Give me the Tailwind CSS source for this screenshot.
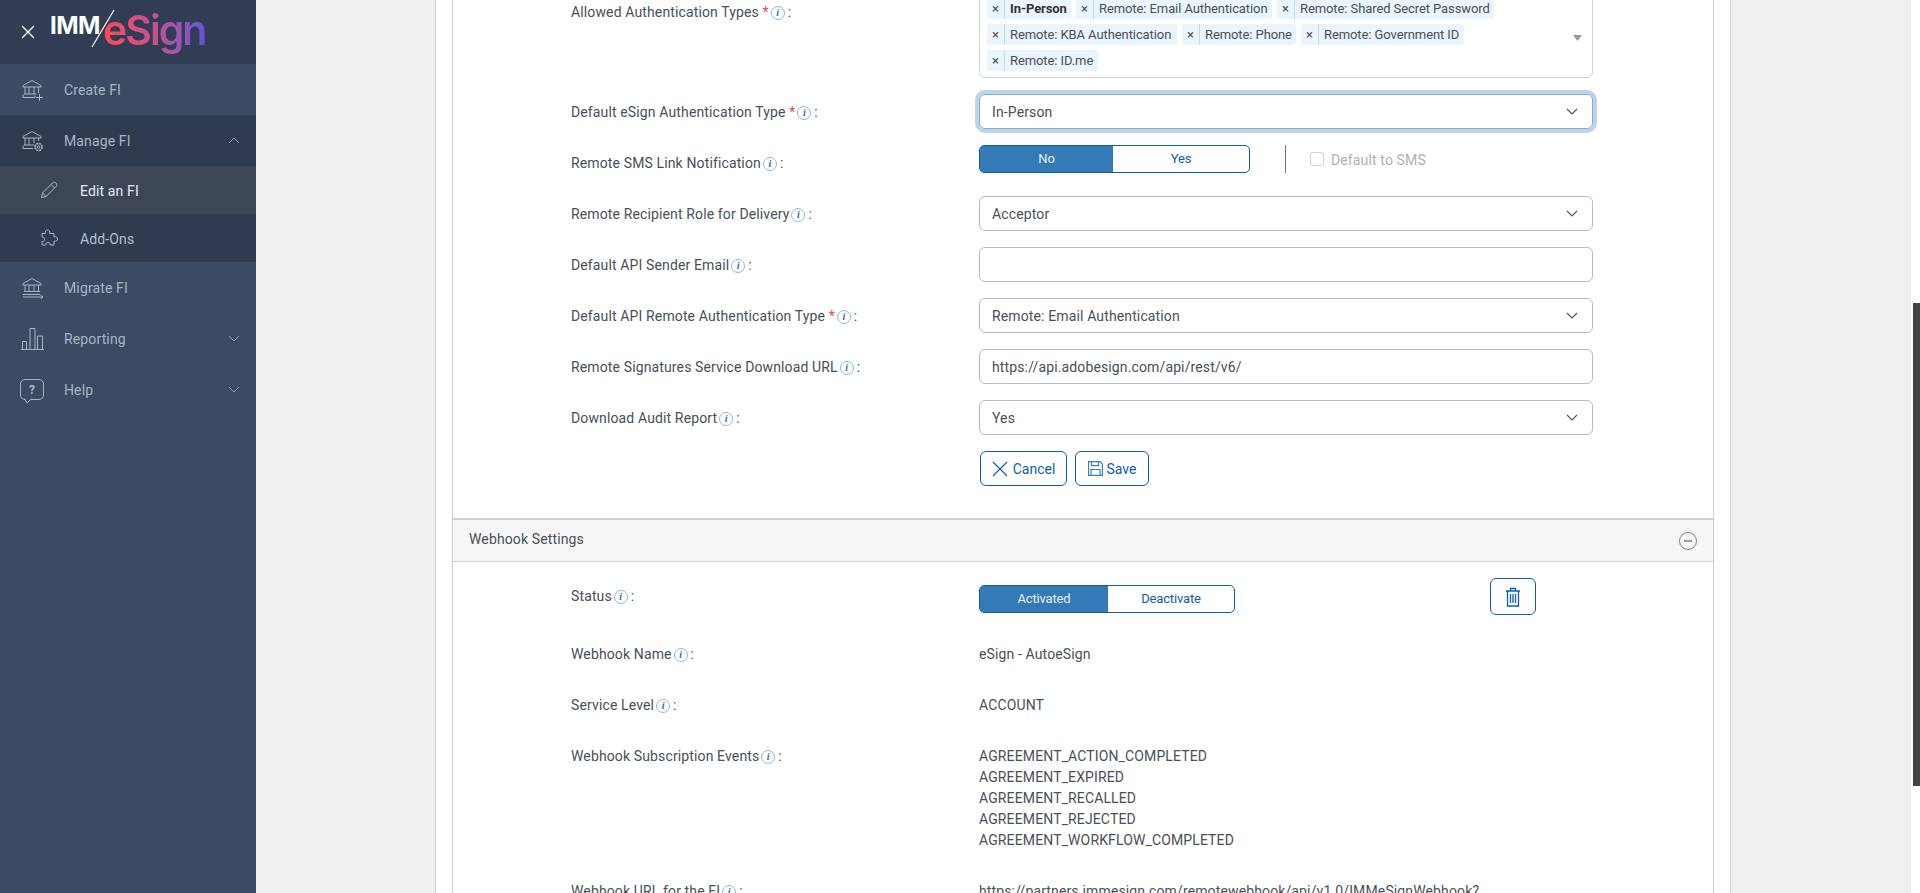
<!DOCTYPE html>
<html lang="en">
<head>
<meta charset="UTF-8">
<title>IMM eSign</title>
<script src="https://cdn.jsdelivr.net/npm/@tailwindcss/browser@4"></script>
</head>
<body class="font-['Roboto',sans-serif] text-[14px] tracking-[0.13px] text-[#495057] bg-white overflow-hidden">
<div class="flex h-[893px] overflow-hidden">

  <!-- Sidebar -->
  <aside class="w-[256px] shrink-0 bg-[#3b4b63] text-[14px] text-[#a9b4c4]">
    <div class="relative h-[64px] bg-[#313d54]">
      <svg class="absolute left-[21px] top-[25px] size-[14px]" viewBox="0 0 14 14" fill="none" stroke="#fff" stroke-width="1.3"><path d="M1 1l12 12M13 1L1 13"/></svg>
      <span class="absolute left-[50px] top-[11px] font-['Inter',sans-serif] font-bold text-[24px] tracking-[-0.6px] leading-[30px] text-white">IMM</span>
      <svg class="absolute left-[90px] top-[8px] w-[26px] h-[42px]" viewBox="0 0 26 42" fill="none" stroke="#fff" stroke-width="1.2"><path d="M2 39L24 2"/></svg>
      <span class="absolute left-[103px] top-[3px] font-['Inter',sans-serif] font-semibold text-[41px] tracking-[-2px] leading-[54px] bg-linear-to-r from-[#ff4a50] via-[#c64f8c] to-[#6650d6] bg-clip-text text-transparent">eSign</span>
    </div>

    <a class="flex items-center h-[51px] pl-[22px]">
      <svg class="w-[22px] h-[22px] mr-[20px]" viewBox="0 0 22 22" fill="none" stroke="#a9b4c4"><path d="M1 6.5L10 1.500l9 5v1.500H1zM3 8v7M7 8v7M12 8v7M16.500 8v6M2 15h12M1 18.500h12v-2M1 18.500v-3M14 18.500h7M17.500 15v7"/></svg>
      <span class="pt-[2px]">Create FI</span>
    </a>
    <a class="flex items-center h-[51px] pl-[22px] pr-[16px] bg-[#2f3c50]">
      <svg class="w-[22px] h-[22px] mr-[20px]" viewBox="0 0 22 22" fill="none" stroke="#a9b4c4"><path d="M1 6.500L10 1.500l9 5V8H1zM3 8v7M7 8v7M12 8v5M16.500 8v3M2 15h10M1 18.500h10M1 18.500v-3"/><circle cx="16.500" cy="17" r="3.500" stroke-width="1.700" stroke-dasharray="2 0.750"/><circle cx="16.500" cy="17" r="1.300"/></svg>
      <span class="pt-[2px]">Manage FI</span>
      <svg class="ml-auto w-[12px] h-[7px]" viewBox="0 0 12 7" fill="none" stroke="#8d99ab"><path d="M1 6l5-5 5 5"/></svg>
    </a>
    <a class="flex items-center h-[48px] pl-[40px] bg-[#3c4656] text-[#e8eaee]">
      <svg class="w-[18px] h-[18px] mr-[22px]" viewBox="0 0 18 18" fill="none" stroke="#a9b4c4"><path d="M1.500 16.500l1-4.500L12.500 2c1-1 2.500-1 3.500 0s1 2.500 0 3.500L6 15.500zM2.500 12L6 15.500M11 3.500L14.500 7"/></svg>
      <span class="pt-[2px]">Edit an FI</span>
    </a>
    <a class="flex items-center h-[48px] pl-[40px] bg-[#2f3c50] text-[#b6bfcc]">
      <svg class="w-[18px] h-[18px] mr-[22px]" viewBox="0 0 18 18" fill="none" stroke="#a9b4c4"><path d="M2 4.500h3.500C4.500 2.500 6 1 7.500 1S10.500 2.500 9.500 4.500H14v3.500c2-1 3.500.5 3.500 2s-1.500 3-3.500 2V16H10c.8-1.500-.5-2.500-2-2.500S5.200 14.500 6 16H2v-3.500c1 .5 2.500-.2 2.500-2S3 7.500 2 8z"/></svg>
      <span class="pt-[2px]">Add-Ons</span>
    </a>
    <a class="flex items-center h-[51px] pl-[22px]">
      <svg class="w-[22px] h-[22px] mr-[20px]" viewBox="0 0 22 22" fill="none" stroke="#a9b4c4"><path d="M1 6.500L10 1.500l9 5V8H1zM3 8v6M7 8v6M12 8v6M16.500 8v6M2 14.500h16M1 17.500h17M1 20h20M18.500 18l2.500 2-2.500 2"/></svg>
      <span class="pt-[2px]">Migrate FI</span>
    </a>
    <a class="flex items-center h-[51px] pl-[20px] pr-[16px]">
      <svg class="w-[24px] h-[24px] mr-[20px]" viewBox="0 0 24 24" fill="none" stroke="#a9b4c4"><path d="M1 22.500h23M2.500 22V14.500h4V22M10 22V1.500h5V22M17.500 22V9h5v13"/></svg>
      <span class="pt-[2px]">Reporting</span>
      <svg class="ml-auto w-[12px] h-[7px]" viewBox="0 0 12 7" fill="none" stroke="#8d99ab"><path d="M1 1l5 5 5-5"/></svg>
    </a>
    <a class="flex items-center h-[51px] pl-[20px] pr-[16px]">
      <span class="relative flex items-center justify-center w-[24px] h-[21px] mr-[20px] rounded-[5px] border border-[#a9b4c4] text-[12px] font-bold text-[#a9b4c4]">?
        <svg class="absolute left-[3px] top-[18px] w-[9px] h-[6px]" viewBox="0 0 9 6" fill="#3b4b63" stroke="#a9b4c4"><path d="M0.500 0.500L3 5l5-4.500"/></svg>
      </span>
      <span class="pt-[2px]">Help</span>
      <svg class="ml-auto w-[12px] h-[7px]" viewBox="0 0 12 7" fill="none" stroke="#8d99ab"><path d="M1 1l5 5 5-5"/></svg>
    </a>
  </aside>

  <!-- Page background -->
  <main class="w-[1655px] shrink-0 bg-[#f0f0f0] pl-[179px] pr-[180px]">
    <div class="h-[893px] w-[1296px] bg-white border-x border-[#d0d0d0] px-[16px]">
      <div class="h-[893px] w-[1262px] border-x border-[#d0d0d0] overflow-hidden">

        <!-- Signature settings form -->
        <form class="pl-[118px] -mt-[7px] pb-[32px]">
          <div class="flex items-start mb-[16px]">
            <label class="w-[408px] mt-[9px]">Allowed Authentication Types <span class="text-[#e5484d]">*</span><span class="inline-flex items-center justify-center size-[14px] ml-[2px] mr-[3px] rounded-full border border-[#8fb8da] font-['Liberation_Serif',serif] italic font-bold text-[10px] text-[#2a6fb0] align-[1px]">i</span>:</label>
            <div class="relative w-[614px] h-[85px] rounded-[6px] border border-[#cfcfcf] pl-[7px] pt-[4px] pr-[30px] flex flex-wrap content-start gap-x-[5px] gap-y-[5px] text-[13px] tracking-[-0.09px]">
              <span class="flex h-[21px] w-[84px] rounded-[3px] bg-[#ebf5ff] leading-[21px]"><span class="w-[18px] text-center border-r border-[#b9d9f7]">×</span><span class="pl-[5px] font-bold text-[#333]">In-Person</span></span>
              <span class="flex h-[21px] w-[196px] rounded-[3px] bg-[#ebf5ff] leading-[21px]"><span class="w-[18px] text-center border-r border-[#b9d9f7]">×</span><span class="pl-[5px]">Remote: Email Authentication</span></span>
              <span class="flex h-[21px] w-[217px] rounded-[3px] bg-[#ebf5ff] leading-[21px]"><span class="w-[18px] text-center border-r border-[#b9d9f7]">×</span><span class="pl-[5px]">Remote: Shared Secret Password</span></span>
              <span class="flex h-[21px] w-[190px] rounded-[3px] bg-[#ebf5ff] leading-[21px]"><span class="w-[18px] text-center border-r border-[#b9d9f7]">×</span><span class="pl-[5px]">Remote: KBA Authentication</span></span>
              <span class="flex h-[21px] w-[114px] rounded-[3px] bg-[#ebf5ff] leading-[21px]"><span class="w-[18px] text-center border-r border-[#b9d9f7]">×</span><span class="pl-[5px]">Remote: Phone</span></span>
              <span class="flex h-[21px] w-[163px] rounded-[3px] bg-[#ebf5ff] leading-[21px]"><span class="w-[18px] text-center border-r border-[#b9d9f7]">×</span><span class="pl-[5px]">Remote: Government ID</span></span>
              <span class="flex h-[21px] w-[111px] rounded-[3px] bg-[#ebf5ff] leading-[21px]"><span class="w-[18px] text-center border-r border-[#b9d9f7]">×</span><span class="pl-[5px]">Remote: ID.me</span></span>
              <svg class="absolute right-[10px] top-[41px] w-[9px] h-[6px]" viewBox="0 0 9 6" fill="#999"><path d="M0 0h9L4.500 6z"/></svg>
            </div>
          </div>

          <div class="flex items-center h-[35px] mb-[16px]">
            <label class="w-[408px] pt-[2px]">Default eSign Authentication Type <span class="text-[#e5484d]">*</span><span class="inline-flex items-center justify-center size-[14px] ml-[2px] mr-[3px] rounded-full border border-[#8fb8da] font-['Liberation_Serif',serif] italic font-bold text-[10px] text-[#2a6fb0] align-[1px]">i</span>:</label>
            <div class="flex items-center justify-between w-[614px] h-[35px] rounded-[6px] border border-[#7fb0d8] ring-4 ring-[#bcd4e8] pl-[12px] pr-[14px]"><span class="pt-[2px]">In-Person</span>
              <svg class="w-[12px] h-[7px]" viewBox="0 0 12 7" fill="none" stroke="#555" stroke-width="1.200"><path d="M1 1l5 5 5-5"/></svg>
            </div>
          </div>

          <div class="flex items-center h-[35px] mb-[16px]">
            <label class="w-[408px] pt-[2px]">Remote SMS Link Notification<span class="inline-flex items-center justify-center size-[14px] ml-[2px] mr-[3px] rounded-full border border-[#8fb8da] font-['Liberation_Serif',serif] italic font-bold text-[10px] text-[#2a6fb0] align-[1px]">i</span>:</label>
            <div class="flex items-start h-[35px]">
              <div class="flex w-[271px] h-[28px] rounded-[5px] border border-[#0f5ea8] overflow-hidden text-[13px] tracking-[-0.15px]">
                <span class="flex items-center justify-center w-[133px] bg-[#337ab7] text-[#e8f0f7]">No</span>
                <span class="flex items-center justify-center flex-1 text-[#0f5ea8]">Yes</span>
              </div>
              <span class="w-px h-[28px] ml-[35px] bg-[#777]"></span>
              <span class="flex items-center h-[28px] ml-[24px] text-[#adb0b8]"><span class="size-[14px] mr-[7px] rounded-[3px] border border-[#d0d0d0]"></span><span class="pt-[2px]">Default to SMS</span></span>
            </div>
          </div>

          <div class="flex items-center h-[35px] mb-[16px]">
            <label class="w-[408px] pt-[2px]">Remote Recipient Role for Delivery<span class="inline-flex items-center justify-center size-[14px] ml-[2px] mr-[3px] rounded-full border border-[#8fb8da] font-['Liberation_Serif',serif] italic font-bold text-[10px] text-[#2a6fb0] align-[1px]">i</span>:</label>
            <div class="flex items-center justify-between w-[614px] h-[35px] rounded-[6px] border border-[#b5bcc8] pl-[12px] pr-[14px]"><span class="pt-[2px]">Acceptor</span>
              <svg class="w-[12px] h-[7px]" viewBox="0 0 12 7" fill="none" stroke="#555" stroke-width="1.200"><path d="M1 1l5 5 5-5"/></svg>
            </div>
          </div>

          <div class="flex items-center h-[35px] mb-[16px]">
            <label class="w-[408px] pt-[2px]">Default API Sender Email<span class="inline-flex items-center justify-center size-[14px] ml-[2px] mr-[3px] rounded-full border border-[#8fb8da] font-['Liberation_Serif',serif] italic font-bold text-[10px] text-[#2a6fb0] align-[1px]">i</span>:</label>
            <div class="w-[614px] h-[35px] rounded-[6px] border border-[#b5bcc8]"></div>
          </div>

          <div class="flex items-center h-[35px] mb-[16px]">
            <label class="w-[408px] pt-[2px]">Default API Remote Authentication Type <span class="text-[#e5484d]">*</span><span class="inline-flex items-center justify-center size-[14px] ml-[2px] mr-[3px] rounded-full border border-[#8fb8da] font-['Liberation_Serif',serif] italic font-bold text-[10px] text-[#2a6fb0] align-[1px]">i</span>:</label>
            <div class="flex items-center justify-between w-[614px] h-[35px] rounded-[6px] border border-[#b5bcc8] pl-[12px] pr-[14px]"><span class="pt-[2px]">Remote: Email Authentication</span>
              <svg class="w-[12px] h-[7px]" viewBox="0 0 12 7" fill="none" stroke="#555" stroke-width="1.200"><path d="M1 1l5 5 5-5"/></svg>
            </div>
          </div>

          <div class="flex items-center h-[35px] mb-[16px]">
            <label class="w-[408px] pt-[2px]">Remote Signatures Service Download URL<span class="inline-flex items-center justify-center size-[14px] ml-[2px] mr-[3px] rounded-full border border-[#8fb8da] font-['Liberation_Serif',serif] italic font-bold text-[10px] text-[#2a6fb0] align-[1px]">i</span>:</label>
            <div class="flex items-center w-[614px] h-[35px] rounded-[6px] border border-[#b5bcc8] px-[12px]"><span class="pt-[2px]">https://api.adobesign.com/api/rest/v6/</span></div>
          </div>

          <div class="flex items-center h-[35px] mb-[16px]">
            <label class="w-[408px] pt-[2px]">Download Audit Report<span class="inline-flex items-center justify-center size-[14px] ml-[2px] mr-[3px] rounded-full border border-[#8fb8da] font-['Liberation_Serif',serif] italic font-bold text-[10px] text-[#2a6fb0] align-[1px]">i</span>:</label>
            <div class="flex items-center justify-between w-[614px] h-[35px] rounded-[6px] border border-[#b5bcc8] pl-[12px] pr-[14px]"><span class="pt-[2px]">Yes</span>
              <svg class="w-[12px] h-[7px]" viewBox="0 0 12 7" fill="none" stroke="#555" stroke-width="1.200"><path d="M1 1l5 5 5-5"/></svg>
            </div>
          </div>

          <div class="flex gap-[8px] ml-[409px] text-[#0f5ea8] tracking-normal">
            <button type="button" class="flex items-center justify-center w-[87px] h-[35px] rounded-[6px] border border-[#0f5ea8]">
              <svg class="size-[16px] mr-[5px]" viewBox="0 0 16 16" fill="none" stroke="#0f5ea8" stroke-width="1.200"><path d="M1 1l14 14M15 1L1 15"/></svg><span class="pt-[2px]">Cancel</span>
            </button>
            <button type="button" class="flex items-center justify-center w-[74px] h-[35px] rounded-[6px] border border-[#0f5ea8]">
              <svg class="size-[15px] mr-[4px]" viewBox="0 0 15 15" fill="none" stroke="#3f7fb8" stroke-width="1.200"><path d="M.6.600h11.400l2.400 2.400v11.400H.6zM3.500.600v4h7v-4M3 14.400V8.500h9v5.900"/></svg><span class="pt-[2px]">Save</span>
            </button>
          </div>
        </form>

        <!-- Webhook settings -->
        <section>
          <div class="flex items-center justify-between h-[44px] pl-[16px] pr-[16px] bg-[#f6f6f6] border-t-2 border-b border-[#d0d0d0]">
            <span class="pb-[2px]">Webhook Settings</span>
            <svg class="size-[18px]" viewBox="0 0 18 18" fill="none" stroke="#7c8794"><circle cx="9" cy="9" r="8.500"/><path d="M5 9h8" stroke-width="1.500"/></svg>
          </div>
          <div class="pl-[118px] pt-[16px]">
            <div class="flex items-center h-[37px] mb-[21px]">
              <label class="w-[408px]">Status<span class="inline-flex items-center justify-center size-[14px] ml-[2px] mr-[3px] rounded-full border border-[#8fb8da] font-['Liberation_Serif',serif] italic font-bold text-[10px] text-[#2a6fb0] align-[1px]">i</span>:</label>
              <div class="flex w-[256px] h-[28px] mt-[5px] rounded-[5px] border border-[#0f5ea8] overflow-hidden text-[13px] tracking-[-0.15px]">
                <span class="flex items-center justify-center w-[128px] bg-[#337ab7] text-[#e8f0f7]">Activated</span>
                <span class="flex items-center justify-center flex-1 text-[#0f5ea8]">Deactivate</span>
              </div>
              <button type="button" class="flex items-center justify-center w-[46px] h-[37px] ml-[255px] rounded-[6px] border border-[#0f5ea8]">
                <svg class="w-[16px] h-[20px]" viewBox="0 0 16 20" fill="none" stroke="#0f5ea8" stroke-width="1.300"><path d="M1 4h14M5.500 4V1.500h5V4M2.500 4v15h11V4M5.500 7v9M8 7v9M10.500 7v9"/></svg>
              </button>
            </div>
            <div class="flex items-center h-[35px] mb-[16px] pt-[2px]">
              <label class="w-[408px]">Webhook Name<span class="inline-flex items-center justify-center size-[14px] ml-[2px] mr-[3px] rounded-full border border-[#8fb8da] font-['Liberation_Serif',serif] italic font-bold text-[10px] text-[#2a6fb0] align-[1px]">i</span>:</label>
              <span>eSign - AutoeSign</span>
            </div>
            <div class="flex items-center h-[35px] mb-[16px] pt-[2px]">
              <label class="w-[408px]">Service Level<span class="inline-flex items-center justify-center size-[14px] ml-[2px] mr-[3px] rounded-full border border-[#8fb8da] font-['Liberation_Serif',serif] italic font-bold text-[10px] text-[#2a6fb0] align-[1px]">i</span>:</label>
              <span>ACCOUNT</span>
            </div>
            <div class="flex items-start pt-[8px] mb-[22px] leading-[21px]">
              <label class="w-[408px]">Webhook Subscription Events<span class="inline-flex items-center justify-center size-[14px] ml-[2px] mr-[3px] rounded-full border border-[#8fb8da] font-['Liberation_Serif',serif] italic font-bold text-[10px] text-[#2a6fb0] align-[1px]">i</span>:</label>
              <div>AGREEMENT_ACTION_COMPLETED<br>AGREEMENT_EXPIRED<br>AGREEMENT_RECALLED<br>AGREEMENT_REJECTED<br>AGREEMENT_WORKFLOW_COMPLETED</div>
            </div>
            <div class="flex items-start pt-[8px] leading-[21px]">
              <label class="w-[408px]">Webhook URL for the FI<span class="inline-flex items-center justify-center size-[14px] ml-[2px] mr-[3px] rounded-full border border-[#8fb8da] font-['Liberation_Serif',serif] italic font-bold text-[10px] text-[#2a6fb0] align-[1px]">i</span>:</label>
              <div>https://partners.immesign.com/remotewebhook/api/v1.0/IMMeSignWebhook?</div>
            </div>
          </div>
        </section>
      </div>
    </div>
  </main>

  <!-- Scrollbar -->
  <div class="flex-1 pl-[2px] pt-[303px]">
    <div class="h-[483px] bg-[#444]"></div>
  </div>
</div>
</body>
</html>
